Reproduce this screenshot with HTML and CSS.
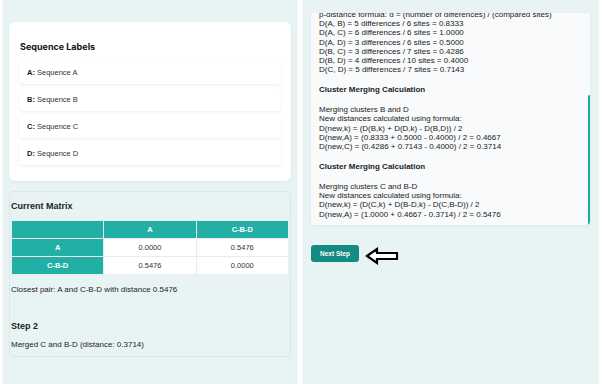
FILE: index.html
```html
<!DOCTYPE html>
<html lang="en">
<head>
    <meta charset="UTF-8">
    <meta name="viewport" content="width=device-width, initial-scale=1.0">
    <title>UPGMA Step Viewer</title>
    <link rel="stylesheet" href="styles.css">
</head>
<body>
    <div class="layout">
        <!-- left side: labels + matrix -->
        <div class="panel left-panel">
            <div class="labels-card">
                <h2>Sequence Labels</h2>
                <div class="label-list">
                    <div class="label-item"><b>A:</b> Sequence A</div>
                    <div class="label-item"><b>B:</b> Sequence B</div>
                    <div class="label-item"><b>C:</b> Sequence C</div>
                    <div class="label-item"><b>D:</b> Sequence D</div>
                </div>
            </div>

            <div class="matrix-box">
                <h3>Current Matrix</h3>
                <table class="matrix">
                    <tr><th></th><th>A</th><th>C-B-D</th></tr>
                    <tr><th>A</th><td>0.0000</td><td>0.5476</td></tr>
                    <tr><th>C-B-D</th><td>0.5476</td><td>0.0000</td></tr>
                </table>
                <p class="closest">Closest pair: A and C-B-D with distance 0.5476</p>
                <h3 class="step-title">Step 2</h3>
                <p class="step-text">Merged C and B-D (distance: 0.3714)</p>
            </div>
        </div>

        <!-- right side: calculation log (scrolled to the bottom) -->
        <div class="panel right-panel">
            <div class="log-box">
                <div class="log">
                    <div>p-distance formula: d = (number of differences) / (compared sites)</div>
                    <div>D(A, B) = 5 differences / 6 sites = 0.8333</div>
                    <div>D(A, C) = 6 differences / 6 sites = 1.0000</div>
                    <div>D(A, D) = 3 differences / 6 sites = 0.5000</div>
                    <div>D(B, C) = 3 differences / 7 sites = 0.4286</div>
                    <div>D(B, D) = 4 differences / 10 sites = 0.4000</div>
                    <div>D(C, D) = 5 differences / 7 sites = 0.7143</div>
                    <div class="log-head">Cluster Merging Calculation</div>
                    <div>Merging clusters B and D</div>
                    <div>New distances calculated using formula:</div>
                    <div>D(new,k) = (D(B,k) + D(D,k) - D(B,D)) / 2</div>
                    <div>D(new,A) = (0.8333 + 0.5000 - 0.4000) / 2 = 0.4667</div>
                    <div>D(new,C) = (0.4286 + 0.7143 - 0.4000) / 2 = 0.3714</div>
                    <div class="log-head">Cluster Merging Calculation</div>
                    <div>Merging clusters C and B-D</div>
                    <div>New distances calculated using formula:</div>
                    <div>D(new,k) = (D(C,k) + D(B-D,k) - D(C,B-D)) / 2</div>
                    <div>D(new,A) = (1.0000 + 0.4667 - 0.3714) / 2 = 0.5476</div>
                </div>
                <div class="scroll-thumb"></div>
            </div>

            <div class="actions">
                <button class="next-btn">Next Step</button>
                <svg class="arrow" width="34" height="18" viewBox="0 0 34 18">
                    <path d="M2 9 L12 2 L12 6 L32 6 L32 12 L12 12 L12 16 Z" fill="#fff" stroke="#000" stroke-width="2.2" stroke-linejoin="miter"/>
                </svg>
            </div>
        </div>
    </div>
</body>
</html>
```

FILE: styles.css
```css
body {
    margin: 0;
    background-color: #fff;
    font-family: "Liberation Sans", Arial, sans-serif;
    color: #222;
}

.layout {
    display: flex;
    gap: 6px;
    padding: 0 4px 0 3px;
    height: 384px;
}

.panel {
    background-color: #e8f4f4;
    box-shadow: 0 0 3px rgba(0, 0, 0, 0.08);
    box-sizing: border-box;
    height: 384px;
}

/* --- left panel --- */
.left-panel {
    width: 294px;
    padding: 22px 6px 0;
}

.labels-card {
    background-color: #fff;
    border-radius: 6px;
    padding: 19px 10px 16px;
    box-shadow: 0 1px 3px rgba(0, 0, 0, 0.06);
}

.labels-card h2 {
    margin: 0 0 8px 1px;
    font-family: Inter, "Liberation Sans", sans-serif;
    font-size: 9px;
    line-height: 12px;
    font-weight: 700;
    color: #111;
}

.label-list {
    display: flex;
    flex-direction: column;
    gap: 4px;
}

.label-item {
    height: 23px;
    line-height: 23px;
    padding-left: 8px;
    font-size: 7.5px;
    border-radius: 4px;
    background-color: #fff;
    box-shadow: 0 1px 3px rgba(0, 0, 0, 0.08);
    color: #333;
}

.label-item b {
    font-weight: 700;
    color: #222;
}

.matrix-box {
    margin-top: 10px;
    height: 166px;
    border: 1px solid #dce8e8;
    border-radius: 4px;
    padding: 0 1px;
    box-sizing: border-box;
}

.matrix-box h3 {
    margin: 9px 0 0;
    font-size: 9px;
    line-height: 10px;
    font-weight: 700;
}

.matrix {
    margin-top: 9px;
    width: 100%;
    border-collapse: collapse;
    font-size: 7.5px;
}

.matrix th,
.matrix td {
    height: 17px;
    padding: 0;
    text-align: center;
    border: 1px solid #e4eeee;
}

.matrix th {
    background-color: #22b0a6;
    color: #fff;
    font-weight: 700;
    width: 33.3%;
}

.matrix td {
    background-color: #fff;
    color: #333;
}

.closest {
    margin: 10px 0 0;
    font-size: 8px;
    line-height: 10px;
}

.matrix-box .step-title {
    margin-top: 26px;
    font-size: 9px;
}

.step-text {
    margin: 9px 0 0;
    font-size: 8px;
    line-height: 10px;
}

/* --- right panel --- */
.right-panel {
    width: 295px;
    padding: 13px 8px 0;
}

.log-box {
    position: relative;
    height: 212px;
    width: 279px;
    background-color: #f8fafb;
    border-radius: 0 0 4px 4px;
    box-shadow: 0 1px 3px rgba(0, 0, 0, 0.06);
    overflow: hidden;
    display: flex;
    flex-direction: column;
    justify-content: flex-end;
}

.log {
    padding: 0 10px 6px 8px;
    font-size: 8px;
    line-height: 9.3px;
    color: #222;
    white-space: nowrap;
}

.log-head {
    font-weight: 700;
    margin: 10px 0 11px;
}

.scroll-thumb {
    position: absolute;
    right: -1px;
    top: 82px;
    width: 3px;
    height: 130px;
    border-radius: 2px;
    background-color: #1fa89e;
}

.actions {
    display: flex;
    align-items: center;
    gap: 6px;
    margin-top: 17px;
}

.next-btn {
    width: 48px;
    height: 17px;
    padding: 0;
    border: none;
    border-radius: 3px;
    background-color: #138a82;
    color: #fff;
    font-family: "Liberation Sans", Arial, sans-serif;
    font-size: 6.5px;
    font-weight: 700;
    cursor: pointer;
}

.arrow {
    margin-top: 5px;
}
```
